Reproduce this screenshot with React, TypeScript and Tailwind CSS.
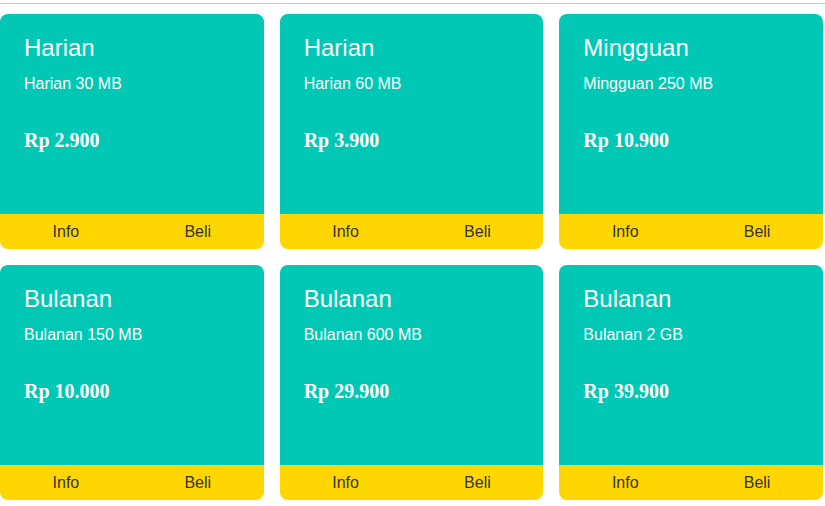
import React from 'react'

interface Paket {
  title: string
  name: string
  price: string
}

const pakets: Paket[] = [
  { title: 'Harian', name: 'Harian 30 MB', price: 'Rp 2.900' },
  { title: 'Harian', name: 'Harian 60 MB', price: 'Rp 3.900' },
  { title: 'Mingguan', name: 'Mingguan 250 MB', price: 'Rp 10.900' },
  { title: 'Bulanan', name: 'Bulanan 150 MB', price: 'Rp 10.000' },
  { title: 'Bulanan', name: 'Bulanan 600 MB', price: 'Rp 29.900' },
  { title: 'Bulanan', name: 'Bulanan 2 GB', price: 'Rp 39.900' },
]

const PaketCard: React.FC<{ paket: Paket }> = ({ paket }) => (
  <div className="flex flex-col overflow-hidden rounded-lg">
    <div className="h-[200px] bg-[#00c8b4] px-6 pt-[19px] text-white">
      <h3 className="text-[24px] leading-[30px] font-normal">{paket.title}</h3>
      <p className="mt-[11px] text-[16px] leading-5">{paket.name}</p>
      <p className="mt-[34px] font-['Liberation_Serif',serif] text-[20px] leading-6 font-bold">
        {paket.price}
      </p>
    </div>
    <div className="grid h-[35px] grid-cols-2 bg-[#ffd600] text-[16px] text-[#333]">
      <button className="flex items-center justify-center">Info</button>
      <button className="flex items-center justify-center">Beli</button>
    </div>
  </div>
)

export default function App() {
  return (
    <div className="min-h-[506px] bg-white pt-[3px] font-['Liberation_Sans',sans-serif]">
      <div className="h-px w-full bg-[#c8c8c8]" />
      <div className="mt-[10px] grid w-[823px] grid-cols-3 gap-4">
        {pakets.map((p, i) => (
          <PaketCard key={i} paket={p} />
        ))}
      </div>
    </div>
  )
}
